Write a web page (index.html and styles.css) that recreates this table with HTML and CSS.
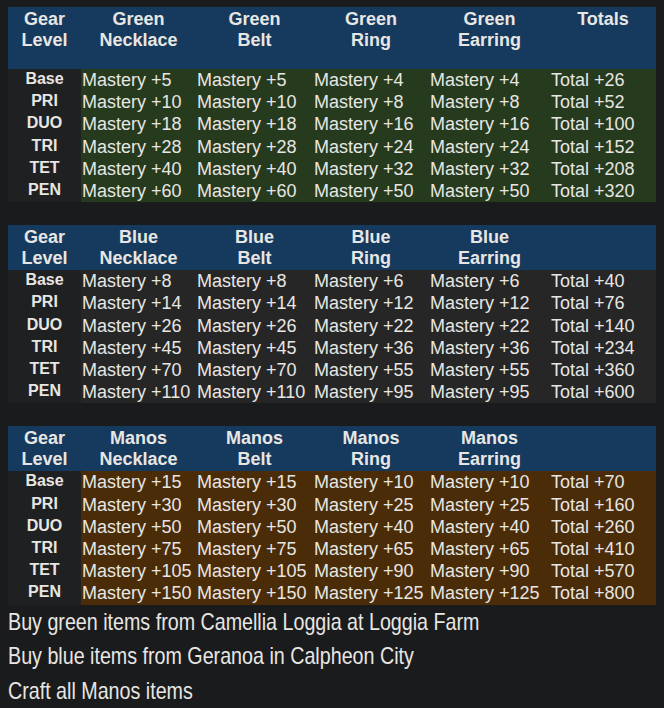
FILE: index.html
```html
<!DOCTYPE html>
<html lang="en">
<head>
<meta charset="utf-8">
<title>Mastery accessories</title>
<link rel="stylesheet" href="styles.css">
</head>
<body>
<table class="gear-table gear-table--green gear-table--tall">
  <colgroup><col class="c-gear"><col class="c-neck"><col class="c-belt"><col class="c-ring"><col class="c-ear"><col class="c-total"></colgroup>
  <thead>
    <tr><th>Gear<br>Level</th><th>Green<br>Necklace</th><th>Green<br>Belt</th><th>Green<br>Ring</th><th>Green<br>Earring</th><th>Totals</th></tr>
  </thead>
  <tbody>
    <tr><th>Base</th><td>Mastery +5</td><td>Mastery +5</td><td>Mastery +4</td><td>Mastery +4</td><td>Total +26</td></tr>
    <tr><th>PRI</th><td>Mastery +10</td><td>Mastery +10</td><td>Mastery +8</td><td>Mastery +8</td><td>Total +52</td></tr>
    <tr><th>DUO</th><td>Mastery +18</td><td>Mastery +18</td><td>Mastery +16</td><td>Mastery +16</td><td>Total +100</td></tr>
    <tr><th>TRI</th><td>Mastery +28</td><td>Mastery +28</td><td>Mastery +24</td><td>Mastery +24</td><td>Total +152</td></tr>
    <tr><th>TET</th><td>Mastery +40</td><td>Mastery +40</td><td>Mastery +32</td><td>Mastery +32</td><td>Total +208</td></tr>
    <tr><th>PEN</th><td>Mastery +60</td><td>Mastery +60</td><td>Mastery +50</td><td>Mastery +50</td><td>Total +320</td></tr>
  </tbody>
</table>

<table class="gear-table gear-table--blue">
  <colgroup><col class="c-gear"><col class="c-neck"><col class="c-belt"><col class="c-ring"><col class="c-ear"><col class="c-total"></colgroup>
  <thead>
    <tr><th>Gear<br>Level</th><th>Blue<br>Necklace</th><th>Blue<br>Belt</th><th>Blue<br>Ring</th><th>Blue<br>Earring</th><th></th></tr>
  </thead>
  <tbody>
    <tr><th>Base</th><td>Mastery +8</td><td>Mastery +8</td><td>Mastery +6</td><td>Mastery +6</td><td>Total +40</td></tr>
    <tr><th>PRI</th><td>Mastery +14</td><td>Mastery +14</td><td>Mastery +12</td><td>Mastery +12</td><td>Total +76</td></tr>
    <tr><th>DUO</th><td>Mastery +26</td><td>Mastery +26</td><td>Mastery +22</td><td>Mastery +22</td><td>Total +140</td></tr>
    <tr><th>TRI</th><td>Mastery +45</td><td>Mastery +45</td><td>Mastery +36</td><td>Mastery +36</td><td>Total +234</td></tr>
    <tr><th>TET</th><td>Mastery +70</td><td>Mastery +70</td><td>Mastery +55</td><td>Mastery +55</td><td>Total +360</td></tr>
    <tr><th>PEN</th><td>Mastery +110</td><td>Mastery +110</td><td>Mastery +95</td><td>Mastery +95</td><td>Total +600</td></tr>
  </tbody>
</table>

<table class="gear-table gear-table--manos">
  <colgroup><col class="c-gear"><col class="c-neck"><col class="c-belt"><col class="c-ring"><col class="c-ear"><col class="c-total"></colgroup>
  <thead>
    <tr><th>Gear<br>Level</th><th>Manos<br>Necklace</th><th>Manos<br>Belt</th><th>Manos<br>Ring</th><th>Manos<br>Earring</th><th></th></tr>
  </thead>
  <tbody>
    <tr><th>Base</th><td>Mastery +15</td><td>Mastery +15</td><td>Mastery +10</td><td>Mastery +10</td><td>Total +70</td></tr>
    <tr><th>PRI</th><td>Mastery +30</td><td>Mastery +30</td><td>Mastery +25</td><td>Mastery +25</td><td>Total +160</td></tr>
    <tr><th>DUO</th><td>Mastery +50</td><td>Mastery +50</td><td>Mastery +40</td><td>Mastery +40</td><td>Total +260</td></tr>
    <tr><th>TRI</th><td>Mastery +75</td><td>Mastery +75</td><td>Mastery +65</td><td>Mastery +65</td><td>Total +410</td></tr>
    <tr><th>TET</th><td>Mastery +105</td><td>Mastery +105</td><td>Mastery +90</td><td>Mastery +90</td><td>Total +570</td></tr>
    <tr><th>PEN</th><td>Mastery +150</td><td>Mastery +150</td><td>Mastery +125</td><td>Mastery +125</td><td>Total +800</td></tr>
  </tbody>
</table>

<div class="notes">
  <p class="note">Buy green items from Camellia Loggia at Loggia Farm</p>
  <p class="note">Buy blue items from Geranoa in Calpheon City</p>
  <p class="note">Craft all Manos items</p>
</div>
</body>
</html>
```

FILE: styles.css
```css
html, body {
  background: #1a1b1d;
}

body {
  margin: 0;
  padding: 7px 8px 0 8px;
  color: #e8e6e3;
  font-family: "Liberation Sans", Arial, sans-serif;
}

.gear-table {
  width: 648px;
  table-layout: fixed;
  border-collapse: collapse;
  border-spacing: 0;
  margin: 0 0 23px 0;
  font-size: 18px;
}

.gear-table--manos {
  margin-bottom: 0;
}

.c-gear { width: 73px; }
.c-neck { width: 115px; }
.c-belt { width: 117px; }
.c-ring { width: 116px; }
.c-ear { width: 121px; }
.c-total { width: 106px; }

.gear-table thead th {
  background: #153a5e;
  font-weight: bold;
  font-size: 18px;
  line-height: 20.7px;
  text-align: center;
  vertical-align: top;
  padding: 1.8px 0;
  color: #e8e6e3;
}

.gear-table--tall thead th {
  height: 58.4px;
}

.gear-table tbody th {
  background: #1f2022;
  font-weight: bold;
  font-size: 16px;
  line-height: 20.2px;
  text-align: center;
  vertical-align: top;
  padding: 0 0 2px 0;
  color: #e8e6e3;
}

.gear-table tbody td {
  font-size: 18px;
  line-height: 20.2px;
  padding: 1px 0 1px 1px;
  text-align: left;
  vertical-align: top;
  white-space: nowrap;
  overflow: hidden;
}

.gear-table--green tbody td { background: #263a1e; }
.gear-table--blue tbody td { background: #262627; }
.gear-table--manos tbody td { background: #4a2c08; }

.notes {
  font-family: "Liberation Sans Narrow", "Arial Narrow", "Liberation Sans", sans-serif;
  font-size: 24px;
  line-height: 34.5px;
}

.note {
  margin: 0;
  white-space: nowrap;
  transform: scaleX(0.82);
  transform-origin: left center;
}
```
